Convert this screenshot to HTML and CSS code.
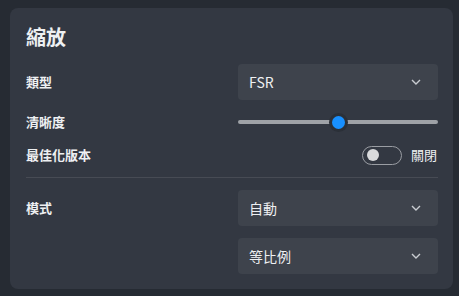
FILE: index.html
```html
<!DOCTYPE html>
<html lang="zh-Hant">
<head>
<meta charset="utf-8">
<link rel="stylesheet" href="styles.css">
</head>
<body>
<section class="card">
  <h1 class="title">縮放</h1>
  <div class="row">
    <span class="label">類型</span>
    <div class="select"><span>FSR</span><svg class="chev" width="10" height="6" viewBox="0 0 10 6"><path d="M1 1l4 4 4-4" fill="none" stroke="#c9ccd1" stroke-width="1.4"/></svg></div>
  </div>
  <div class="row row-slider">
    <span class="label">清晰度</span>
    <div class="slider"><div class="track"></div><div class="thumb" style="left:50%"></div></div>
  </div>
  <div class="row row-toggle">
    <span class="label">最佳化版本</span>
    <div class="toggle-group"><span class="toggle"><span class="knob"></span></span><span class="toggle-text">關閉</span></div>
  </div>
  <hr class="divider">
  <div class="row row-top">
    <span class="label label-tall">模式</span>
    <div class="stack">
      <div class="select"><span>自動</span><svg class="chev" width="10" height="6" viewBox="0 0 10 6"><path d="M1 1l4 4 4-4" fill="none" stroke="#c9ccd1" stroke-width="1.4"/></svg></div>
      <div class="select"><span>等比例</span><svg class="chev" width="10" height="6" viewBox="0 0 10 6"><path d="M1 1l4 4 4-4" fill="none" stroke="#c9ccd1" stroke-width="1.4"/></svg></div>
    </div>
  </div>
</section>
</body>
</html>
```

FILE: styles.css
```css
* { box-sizing: border-box; }
html, body { margin: 0; padding: 0; }
body {
  background: #262b33;
  width: 459px;
  height: 296px;
  overflow: hidden;
  font-family: "Noto Sans CJK TC", "Noto Sans", sans-serif;
  color: #eef0f2;
  padding: 8px 6px 0 10px;
}
.card {
  background: #333842;
  border-radius: 8px;
  padding: 16px 15px 15px 16px;
  height: 281px;
}
.title {
  margin: 0 0 14px;
  font-size: 20px;
  line-height: 26px;
  font-weight: 700;
}
.row {
  display: flex;
  align-items: center;
  justify-content: space-between;
}
.row-top { align-items: flex-start; }
.label {
  font-size: 13px;
  font-weight: 700;
  line-height: 18px;
}
.label-tall { line-height: 36px; }
.select {
  width: 200px;
  height: 36px;
  background: #3e434c;
  border-radius: 4px;
  display: flex;
  align-items: center;
  justify-content: space-between;
  padding: 0 17px 0 11px;
  font-size: 14px;
}
.chev { display: block; }
.row-slider { margin-top: 10px; height: 24px; }
.slider { position: relative; width: 200px; height: 24px; }
.track {
  position: absolute;
  left: 0; right: 0; top: 10px;
  height: 4px;
  border-radius: 2px;
  background: #9fa2a7;
}
.thumb {
  position: absolute;
  top: 12px;
  width: 13px;
  height: 13px;
  margin: -6.5px 0 0 -6.5px;
  border-radius: 50%;
  background: #1890ff;
  box-shadow: 0 0 0 3px #2b3038;
}
.row-toggle { margin-top: 11px; height: 20px; }
.toggle-group { display: flex; align-items: center; gap: 9px; }
.toggle {
  width: 40px;
  height: 19px;
  border: 1px solid #9a9da3;
  border-radius: 10px;
  display: flex;
  align-items: center;
  padding-left: 4px;
}
.knob {
  width: 12px;
  height: 12px;
  border-radius: 50%;
  background: #d9dadc;
}
.toggle-text { font-size: 13px; line-height: 18px; margin-right: 1px; }
.divider {
  border: 0;
  height: 1px;
  background: #474b54;
  margin: 12px 0 12px;
}
.stack { display: flex; flex-direction: column; gap: 12px; }
```
